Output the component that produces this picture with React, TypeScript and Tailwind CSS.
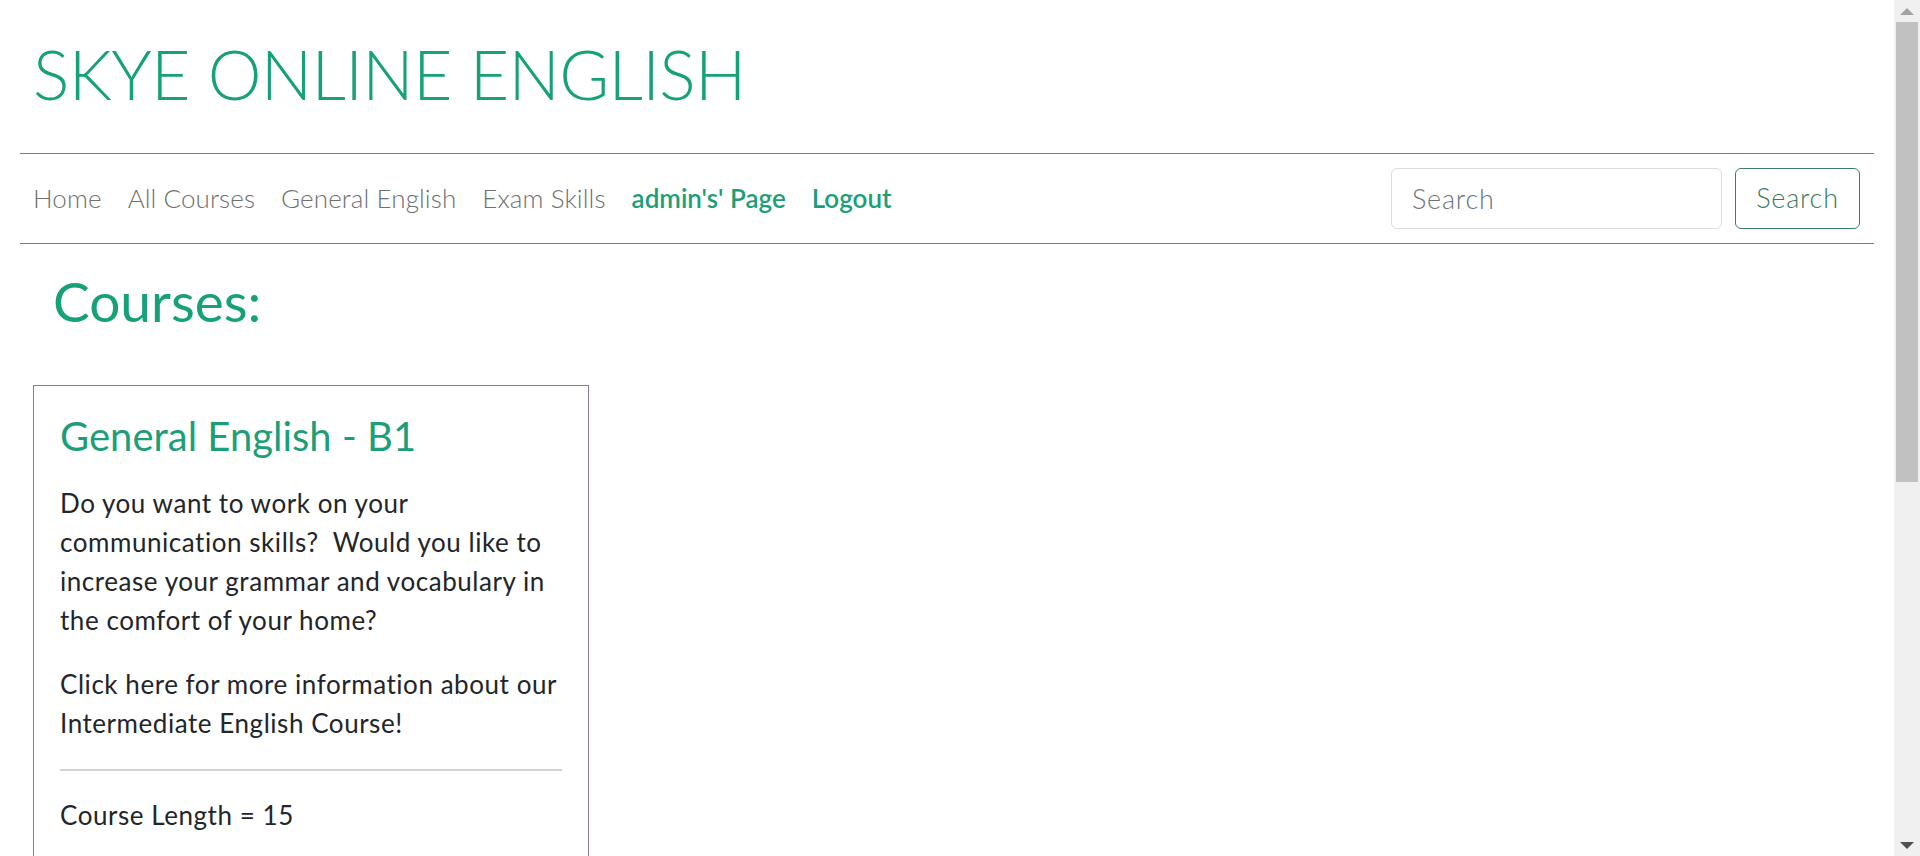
import React from "react";

const font = { fontFamily: "Lato, 'Open Sans', sans-serif" };

function NavLink(props: { label: string; active?: boolean }) {
  return (
    <a
      href="#"
      className={
        props.active
          ? "text-[26px] font-semibold text-[#1c9f78]"
          : "text-[26px] font-light text-[#6f6f6f] tracking-[0.1px]"
      }
    >
      {props.label}
    </a>
  );
}

function Scrollbar() {
  return (
    <div className="w-[26px] h-[856px] bg-[#f0f0f0] flex flex-col items-center shrink-0">
      <div className="h-[22px] w-full flex items-center justify-center">
        <div className="w-0 h-0 border-l-[7px] border-r-[7px] border-b-[7px] border-l-transparent border-r-transparent border-b-[#a3a3a3]" />
      </div>
      <div className="w-[22px] h-[460px] bg-[#c1c1c1]" />
      <div className="flex-1" />
      <div className="h-[22px] w-full flex items-center justify-center">
        <div className="w-0 h-0 border-l-[7px] border-r-[7px] border-t-[7px] border-l-transparent border-r-transparent border-t-[#505050]" />
      </div>
    </div>
  );
}

function CourseCard() {
  const text = "text-[26px] leading-[39px] text-[#222529] tracking-[0.55px]";
  return (
    <div className="w-[556px] border border-[#8d7a8b] px-[26px] pt-[26px] pb-6 ml-[13px]">
      <h2 className="text-[40px] font-normal text-[#1c9f78] leading-[1.2]">
        General English - B1
      </h2>
      <p className={"mt-[24px] " + text}>
        Do you want to work on your
        <br />
        communication skills?&nbsp; Would you like to
        <br />
        increase your grammar and vocabulary in
        <br />
        the comfort of your home?
      </p>
      <p className={"mt-[25px] " + text}>
        Click here for more information about our
        <br />
        Intermediate English Course!
      </p>
      <div className="mt-[26px] border-t-2 border-[#d4d4d4]" />
      <p className={"mt-[25px] " + text}>Course Length = 15</p>
    </div>
  );
}

export default function App() {
  return (
    <div className="flex h-[856px] overflow-hidden bg-white" style={font}>
      <div className="flex-1 min-w-0 px-5">
        <h1 className="pt-[34px] pl-[13px] text-[68px] font-light leading-[80px] text-[#17a179] tracking-[-0.65px]">
          SKYE ONLINE ENGLISH
        </h1>
        <nav className="mt-[39px] border-t-[1.5px] border-b-[1.5px] border-[#8d7189] h-[91px] flex items-center justify-between pl-[13px] pr-[14px]">
          <div className="flex items-center gap-[26px]">
            <NavLink label="Home" />
            <NavLink label="All Courses" />
            <NavLink label="General English" />
            <NavLink label="Exam Skills" />
            <NavLink label="admin's' Page" active />
            <NavLink label="Logout" active />
          </div>
          <div className="flex items-center gap-[13px]">
            <input
              placeholder="Search"
              className="w-[331px] h-[61px] border border-[#dcdcdc] rounded-[6px] px-[20px] text-[27px] font-light tracking-[0.8px] placeholder:text-[#6c757d] outline-none"
            />
            <button className="w-[125px] h-[61px] border border-[#3f7d62] rounded-[6px] text-[27px] font-light tracking-[0.8px] text-[#3a7a5d]">
              Search
            </button>
          </div>
        </nav>
        <h1 className="pl-[33px] pt-[24px] text-[55px] font-normal leading-[66px] text-[#17a179]">
          Courses:
        </h1>
        <div className="mt-[51px]">
          <CourseCard />
        </div>
      </div>
      <Scrollbar />
    </div>
  );
}
